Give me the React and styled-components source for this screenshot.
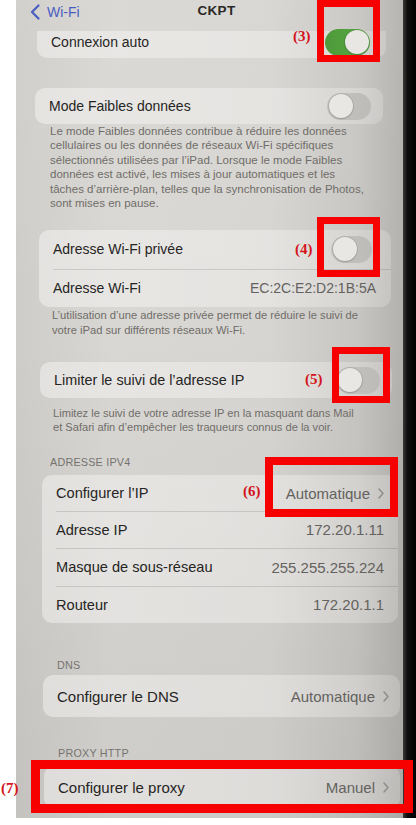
import React from "react";
import styled, { createGlobalStyle } from "styled-components";

const Global = createGlobalStyle`
  html, body { margin: 0; padding: 0; background: #ffffff; }
  body { font-family: "Liberation Sans", Arial, sans-serif; }
  #root { width: 416px; height: 825px; }
`;

const Page = styled.div`
  position: relative;
  width: 416px;
  height: 825px;
  overflow: hidden;
  display: flex;
  align-items: flex-start;
  box-sizing: border-box;
  padding-left: 16px;
  background: #ffffff;
`;

const Screen = styled.main`
  width: 387px;
  height: 818px;
  display: flex;
  flex-direction: column;
  background:
    linear-gradient(180deg, rgba(255,255,255,0.06) 0%, rgba(0,0,0,0) 40%, rgba(0,0,0,0.05) 100%),
    linear-gradient(90deg, #cfcdc9 0%, #d9d7d3 25%, #d7d5d1 65%, #c8c6c2 88%, #b3b1ae 100%);
`;

const Bezel = styled.div`
  width: 13px;
  height: 818px;
  background: linear-gradient(90deg, #3a3937 0%, #0d0d0d 35%, #000 100%);
`;

const NavBar = styled.header`
  height: 31px;
  display: grid;
  grid-template-columns: 1fr auto 1fr;
  align-items: start;
  padding: 4px 0 0 14px;
  box-sizing: border-box;
`;

const Back = styled.div`
  display: flex;
  align-items: center;
  gap: 7px;
  color: #4a5ec2;
  font-size: 14px;
  line-height: 16px;
`;

const Title = styled.div`
  font-size: 13.5px;
  font-weight: 700;
  color: #2a2927;
  line-height: 14px;
  letter-spacing: 0.3px;
`;

const Card = styled.section`
  margin: ${p => p.$mt}px ${p => p.$r}px 0 ${p => p.$l}px;
  background: linear-gradient(90deg, rgba(255,255,255,0.40), rgba(255,255,255,0.32) 70%, rgba(255,255,255,0.2));
  border-radius: ${p => (p.$flatTop ? "0 0 10px 10px" : "10px")};
  display: flex;
  flex-direction: column;
`;

const Row = styled.div`
  position: relative;
  height: ${p => p.$h}px;
  box-sizing: border-box;
  padding: 0 ${p => p.$pr ?? 14}px ${p => p.$pb || 0}px 14px;
  display: flex;
  align-items: center;
  justify-content: space-between;
  &:not(:first-child)::before {
    content: "";
    position: absolute;
    top: 0;
    left: 14px;
    right: 0;
    height: 1px;
    background: rgba(60, 58, 55, 0.16);
  }
`;

const Label = styled.span`
  font-size: ${p => p.$fs}px;
  color: #262523;
  white-space: nowrap;
`;

const Value = styled.span`
  display: flex;
  align-items: center;
  gap: 8px;
  font-size: ${p => p.$fs}px;
  color: #64625e;
  white-space: nowrap;
`;

const Track = styled.span`
  position: relative;
  width: ${p => p.$w || 45}px;
  height: 27px;
  border-radius: 14px;
  background: ${p => (p.$on ? "linear-gradient(90deg,#4e9a3a,#5aa846)" : "linear-gradient(90deg,#c6c4c0,#bdbbb7)")};
  flex-shrink: 0;
`;

const Knob = styled.span`
  position: absolute;
  top: 1.5px;
  ${p => (p.$on ? "right: 1.5px;" : "left: 1.5px;")}
  width: 24px;
  height: 24px;
  border-radius: 50%;
  background: #e8e7e3;
  box-shadow: 0 0 0 1px rgba(0,0,0,0.08), 0 1px 2px rgba(0,0,0,0.15);
`;

const Footer = styled.p`
  margin: 0 0 0 ${p => p.$l}px;
  padding-top: ${p => p.$pt}px;
  font-size: ${p => p.$fs}px;
  line-height: ${p => p.$lh}px;
  color: #6f6d69;
  white-space: nowrap;
`;

const Header = styled.div`
  margin: ${p => p.$mt}px 0 0 ${p => p.$l}px;
  font-size: 10.8px;
  line-height: 13px;
  color: #75736f;
  letter-spacing: 0.2px;
`;

const Box = styled.div`
  position: absolute;
  left: ${p => p.$x}px;
  top: ${p => p.$y}px;
  width: ${p => p.$w}px;
  height: ${p => p.$h}px;
  border: ${p => p.$b}px solid #f60000;
  box-sizing: border-box;
  pointer-events: none;
`;

const Mark = styled.span`
  position: absolute;
  left: ${p => p.$x}px;
  top: ${p => p.$y}px;
  font-family: "Liberation Serif", "Times New Roman", serif;
  font-weight: 700;
  font-size: 15px;
  line-height: 16px;
  color: #d3141c;
`;

const Toggle = ({ on, w }) => (
  <Track $on={on} $w={w}>
    <Knob $on={on} />
  </Track>
);

const Chevron = () => (
  <svg width="6" height="11" viewBox="0 0 6 11" fill="none">
    <path d="M1 1l4 4.5L1 10" stroke="#8f8d89" strokeWidth="1.5" strokeLinecap="round" strokeLinejoin="round" />
  </svg>
);

const BackChevron = () => (
  <svg width="10" height="16" viewBox="0 0 10 16" fill="none">
    <path d="M8.5 1.5L2 8l6.5 6.5" stroke="#4a5ec2" strokeWidth="2.2" strokeLinecap="round" strokeLinejoin="round" />
  </svg>
);

export default function App() {
  return (
    <>
      <Global />
      <Page>
        <Screen>
          <NavBar>
            <Back>
              <BackChevron />
              <span>Wi-Fi</span>
            </Back>
            <Title>CKPT</Title>
            <span />
          </NavBar>

          <Card $mt={0} $l={21} $r={17} $flatTop>
            <Row $h={27} $pb={5} $pr={16}>
              <Label $fs={14}>Connexion auto</Label>
              <Toggle on />
            </Row>
          </Card>

          <Card $mt={30} $l={19} $r={20}>
            <Row $h={36} $pr={12}>
              <Label $fs={14}>Mode Faibles données</Label>
              <Toggle w={44} />
            </Row>
          </Card>
          <Footer $l={34} $pt={0} $lh={14.4} $fs={11.5}>
            Le mode Faibles données contribue à réduire les données<br />
            cellulaires ou les données de réseaux Wi-Fi spécifiques<br />
            sélectionnés utilisées par l’iPad. Lorsque le mode Faibles<br />
            données est activé, les mises à jour automatiques et les<br />
            tâches d’arrière-plan, telles que la synchronisation de Photos,<br />
            sont mises en pause.
          </Footer>

          <Card $mt={19.6} $l={23} $r={12}>
            <Row $h={38.5} $pr={19}>
              <Label $fs={14}>Adresse Wi-Fi privée</Label>
              <Toggle w={41} />
            </Row>
            <Row $h={38.5} $pr={15}>
              <Label $fs={14}>Adresse Wi-Fi</Label>
              <Value $fs={14}>EC:2C:E2:D2:1B:5A</Value>
            </Row>
          </Card>
          <Footer $l={36} $pt={0.5} $lh={15} $fs={11.2}>
            L’utilisation d’une adresse privée permet de réduire le suivi de<br />
            votre iPad sur différents réseaux Wi-Fi.
          </Footer>

          <Card $mt={24.5} $l={24} $r={11}>
            <Row $h={36} $pr={12}>
              <Label $fs={14.4}>Limiter le suivi de l’adresse IP</Label>
              <Toggle w={44} />
            </Row>
          </Card>
          <Footer $l={37} $pt={8} $lh={14} $fs={11.1}>
            Limitez le suivi de votre adresse IP en la masquant dans Mail<br />
            et Safari afin d’empêcher les traqueurs connus de la voir.
          </Footer>

          <Header $mt={22} $l={34}>ADRESSE IPV4</Header>
          <Card $mt={6} $l={26} $r={5}>
            <Row $h={36}>
              <Label $fs={14.6}>Configurer l’IP</Label>
              <Value $fs={15}>Automatique <Chevron /></Value>
            </Row>
            <Row $h={37}>
              <Label $fs={14.6}>Adresse IP</Label>
              <Value $fs={15}>172.20.1.11</Value>
            </Row>
            <Row $h={38}>
              <Label $fs={14.6}>Masque de sous-réseau</Label>
              <Value $fs={15}>255.255.255.224</Value>
            </Row>
            <Row $h={37}>
              <Label $fs={14.6}>Routeur</Label>
              <Value $fs={15}>172.20.1.1</Value>
            </Row>
          </Card>

          <Header $mt={35.5} $l={41}>DNS</Header>
          <Card $mt={3.5} $l={27} $r={3}>
            <Row $h={42} $pr={11}>
              <Label $fs={15}>Configurer le DNS</Label>
              <Value $fs={15}>Automatique <Chevron /></Value>
            </Row>
          </Card>

          <Header $mt={29.5} $l={42}>PROXY HTTP</Header>
          <Card $mt={6.5} $l={28} $r={3}>
            <Row $h={42} $pr={11}>
              <Label $fs={15}>Configurer le proxy</Label>
              <Value $fs={15}>Manuel <Chevron /></Value>
            </Row>
          </Card>
        </Screen>
        <Bezel />

        <Box $x={317} $y={0} $w={63} $h={62} $b={7} />
        <Mark $x={293} $y={28}>(3)</Mark>

        <Box $x={317} $y={217} $w={63} $h={60} $b={7} />
        <Mark $x={295} $y={241}>(4)</Mark>

        <Box $x={332} $y={347} $w={58} $h={56} $b={7} />
        <Mark $x={305} $y={371}>(5)</Mark>

        <Box $x={265} $y={457} $w={133} $h={60} $b={8} />
        <Mark $x={243} $y={483}>(6)</Mark>

        <Box $x={31} $y={760} $w={382} $h={53} $b={9} />
        <Mark $x={1} $y={780}>(7)</Mark>
      </Page>
    </>
  );
}
